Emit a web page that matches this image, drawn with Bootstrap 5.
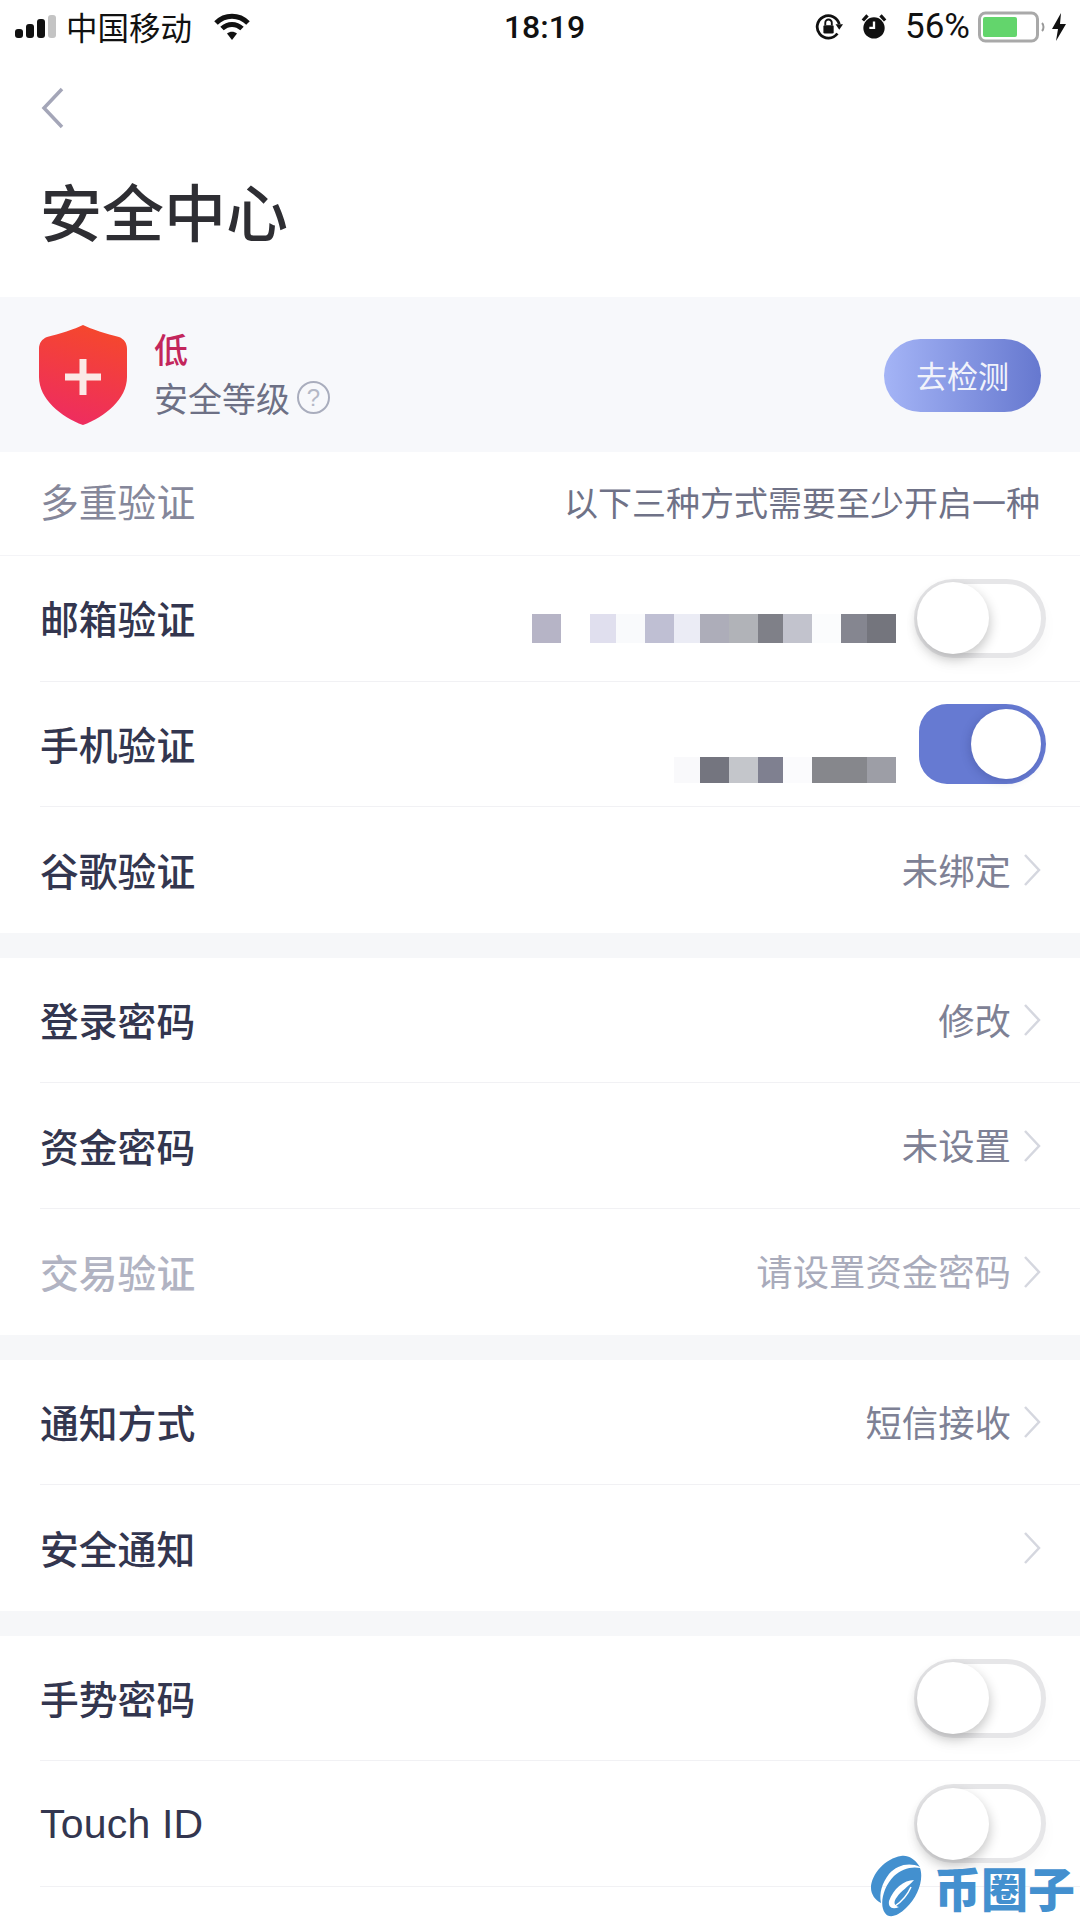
<!DOCTYPE html>
<html lang="zh-CN">
<head>
    <meta charset="UTF-8">
    <meta name="viewport" content="width=device-width, initial-scale=1.0">
    <title>安全中心</title>
    <link href="https://cdn.jsdelivr.net/npm/bootstrap@5.3.0/dist/css/bootstrap.min.css" rel="stylesheet">
    <style>
        body { width: 1080px; height: 1920px; overflow: hidden; background: #fff; font-family: "Noto Sans CJK SC", "Liberation Sans", sans-serif; color: #33364f; }
        .status-bar { height: 54px; padding: 0 13px 0 15px; color: #111; font-size: 31.5px; }
        .status-side { width: 400px; }
        .carrier { margin-left: 10px; margin-right: 21px; }
        .status-time { font-family: Roboto, "Liberation Sans", sans-serif; font-weight: 500; font-size: 32px; margin-left: 7px; }
        .status-pct { font-family: Roboto, "Liberation Sans", sans-serif; font-size: 35px; margin: 0 8px 0 18px; }
        .alarm-icon { margin-left: 18px; }
        .bolt-icon { margin-left: 6px; }
        .back-row { height: 86px; padding: 33px 0 0 41px; }
        .page-title { height: 157px; margin: 0; padding: 28px 0 0 40px; font-size: 62px; line-height: 84px; font-weight: 500; color: #2e2e33; }
        .level-band { height: 155px; background: #f7f8fb; padding: 0 39px; }
        .level-text { margin-left: 27px; }
        .level-low { font-size: 34px; line-height: 44px; font-weight: 500; color: #c3265c; }
        .level-name { font-size: 34px; line-height: 50px; color: #6d7085; margin-top: 2px; }
        .help-mark { width: 33px; height: 33px; border: 2px solid #a9adbd; border-radius: 50%; font-size: 24px; line-height: 29px; text-align: center; color: #b4b8c6; margin-left: 7px; font-family: "Liberation Sans", sans-serif; }
        .check-btn { width: 157px; height: 73px; margin-top: 2px; border: 0; border-radius: 37px; background: linear-gradient(90deg, #a4b4f6, #6678cf); color: #f1f3fb; font-size: 31px; padding: 0; }
        .note-row { height: 104px; padding: 0 40px 4px 40px; border-bottom: 1px solid #f4f4f7; }
        .note-row .row-label { color: #85879a; }
        .note-text { font-size: 34px; color: #6f7287; }
        .set-row { height: 125.6px; margin-left: 40px; padding-right: 39px; border-bottom: 1px solid #f1f1f4; }
        .set-row:last-child { border-bottom: 0; }
        .row-label { font-size: 38.8px; font-weight: 500; color: #33364f; white-space: nowrap; margin-bottom: 2px; }
        .row-label.latin { font-family: "Liberation Sans", Arial, sans-serif; font-size: 41px; font-weight: 400; letter-spacing: .2px; margin: 2px 0 0; }
        .row-value { font-size: 36.4px; color: #7e8195; margin-right: 12px; margin-bottom: 2px; }
        .row-off .row-label { color: #b1b3c2; }
        .row-off .row-value { color: #a9abbb; }
        .chev { width: 18px; height: 34px; }
        .gap-band { height: 25px; background: #f6f7f9; }
        .blur-strip { height: 29px; margin-right: 18px; margin-top: 20px; }
        .blur-strip.lower { height: 26px; margin-top: 52px; margin-right: 23px; }
        .blur-strip span { height: 100%; }
        .toggle-track { width: 132px; height: 79px; border: 5px solid #e6e6e8; border-radius: 40px; background: #fff; margin-right: -5px; padding: 0 0 0 0; }
        .toggle-knob { width: 72px; height: 72px; border-radius: 50%; background: #fff; box-shadow: 1px 5px 12px rgba(0,0,0,.22); margin-left: -2px; }
        .toggle-track.is-on { border: 0; width: 127px; height: 80px; background: #667ad2; padding-right: 5px; border-radius: 28px 40px 40px 28px; }
        .toggle-track.is-on .toggle-knob { width: 70px; height: 70px; margin-left: 0; box-shadow: -2px 2px 8px rgba(40,50,110,.25); }
        .toggle-track.is-off-shadow { box-shadow: 0 8px 14px rgba(0,0,0,.03); }
        .page-body { position: relative; height: 1920px; overflow: hidden; }
        .water-mark { position: absolute; left: 870px; top: 1855px; height: 63px; }
        .water-text { font-weight: 900; font-size: 47px; line-height: 63px; color: #4390cf; margin-left: 12px; white-space: nowrap; }
    </style>
</head>
<body>
<div class="page-body">
    <div class="status-bar d-flex align-items-center justify-content-between">
        <div class="status-side d-flex align-items-center">
            <svg width="41" height="24" viewBox="0 0 41 24"><rect x="0" y="14" width="8" height="9" rx="3" fill="#111"/><rect x="11" y="9" width="8" height="14" rx="3" fill="#111"/><rect x="22" y="4" width="8" height="19" rx="3" fill="#111"/><rect x="33" y="0" width="8" height="23" rx="3" fill="#c4c4c4"/></svg>
            <span class="carrier">中国移动</span>
            <svg width="38" height="28" viewBox="0 0 38 28"><path d="M3 10C12 1 26 1 35 10" fill="none" stroke="#111" stroke-width="5"/><path d="M9 15.500C15 10 23 10 29 15.500" fill="none" stroke="#111" stroke-width="5"/><path d="M14 20.500C17 18 21 18 24 20.500L19 27Z" fill="#111"/></svg>
        </div>
        <div class="status-time">18:19</div>
        <div class="status-side d-flex align-items-center justify-content-end">
            <svg width="28" height="30" viewBox="0 0 30 30"><path d="M24 22A12 12 0 1 1 26 12" fill="none" stroke="#111" stroke-width="3"/><path d="M22 12L30 12L26 18Z" fill="#111"/><rect x="9" y="13" width="11" height="9" rx="1.500" fill="#111"/><path d="M11 13V10.500A3.500 3.500 0 0 1 18 10.500V13" fill="none" stroke="#111" stroke-width="2"/></svg>
            <svg class="alarm-icon" width="26" height="30" viewBox="0 0 28 30"><circle cx="14" cy="16" r="11.500" fill="#111"/><path d="M14 9V16H9" fill="none" stroke="#fff" stroke-width="2.500"/><path d="M2 8L7 2.500M26 8L21 2.500" stroke="#111" stroke-width="3.500"/></svg>
            <span class="status-pct">56%</span>
            <svg width="67" height="34" viewBox="0 0 67 34"><rect x="1.500" y="3" width="58" height="28" rx="6" fill="#fff" stroke="#a9a9a9" stroke-width="3"/><rect x="5" y="7" width="34" height="20" rx="2" fill="#63d56c"/><path d="M64 13C66 15 66 19 64 21" fill="none" stroke="#999" stroke-width="2"/></svg>
            <svg class="bolt-icon" width="16" height="30" viewBox="0 0 16 30"><path d="M10 1L1 17H7L5 29L15 12H9Z" fill="#111"/></svg>
        </div>
    </div>

    <div class="back-row">
        <svg class="d-block" width="24" height="42" viewBox="0 0 24 42"><path d="M21 2L3 21L21 40" fill="none" stroke="#a4a6b8" stroke-width="3.500"/></svg>
    </div>
    <h1 class="page-title">安全中心</h1>

    <div class="level-band d-flex align-items-center justify-content-between">
        <div class="d-flex align-items-center">
            <svg width="88" height="100" viewBox="0 0 88 100">
                <defs><linearGradient id="shieldFill" x1="0.650" y1="0" x2="0.400" y2="1"><stop offset="0" stop-color="#f5482c"/><stop offset="1" stop-color="#ee2c60"/></linearGradient></defs>
                <path d="M44 0C52 4 68 9 80 12C85 14 88 18 88 24V52C88 74 66 92 44 100C22 92 0 74 0 52V24C0 18 3 14 8 12C20 9 36 4 44 0Z" fill="url(#shieldFill)"/>
                <path d="M44 34V70M26 52H62" stroke="#fbe9e6" stroke-width="7"/>
            </svg>
            <div class="level-text">
                <div class="level-low">低</div>
                <div class="level-name d-flex align-items-center">安全等级<span class="help-mark">?</span></div>
            </div>
        </div>
        <button class="btn check-btn" type="button">去检测</button>
    </div>

    <div class="note-row d-flex align-items-center justify-content-between">
        <span class="row-label fw-normal">多重验证</span>
        <span class="note-text">以下三种方式需要至少开启一种</span>
    </div>

    <div class="list-rows">
        <div class="set-row d-flex align-items-center">
            <span class="row-label me-auto">邮箱验证</span>
            <div class="blur-strip d-flex" data-cells="29:#b6b4c6,29:#fff,26:#e0dfee,29:#f9fafc,29:#bfbfd3,26:#ebecf5,29:#adadb9,29:#b1b3b8,25:#7f8088,29:#c2c3cd,29:#fbfcfd,26:#858690,29:#74757d"></div>
            <div class="toggle-track is-off-shadow d-flex align-items-center"><div class="toggle-knob"></div></div>
        </div>
        <div class="set-row d-flex align-items-center">
            <span class="row-label me-auto">手机验证</span>
            <div class="blur-strip lower d-flex" data-cells="26:#f9f9fb,29:#74757f,29:#c4c6cb,25:#7f8090,29:#fbfbfd,55:#86878c,29:#9d9ea6"></div>
            <div class="toggle-track is-on d-flex align-items-center justify-content-end"><div class="toggle-knob"></div></div>
        </div>
        <div class="set-row d-flex align-items-center">
            <span class="row-label me-auto">谷歌验证</span>
            <span class="row-value">未绑定</span>
            <svg class="chev" viewBox="0 0 18 34"><path d="M2 2L16 17L2 32" fill="none" stroke="#d5d7df" stroke-width="2.500"/></svg>
        </div>
    </div>
    <div class="gap-band"></div>

    <div class="list-rows">
        <div class="set-row d-flex align-items-center">
            <span class="row-label me-auto">登录密码</span>
            <span class="row-value">修改</span>
            <svg class="chev" viewBox="0 0 18 34"><path d="M2 2L16 17L2 32" fill="none" stroke="#d5d7df" stroke-width="2.500"/></svg>
        </div>
        <div class="set-row d-flex align-items-center">
            <span class="row-label me-auto">资金密码</span>
            <span class="row-value">未设置</span>
            <svg class="chev" viewBox="0 0 18 34"><path d="M2 2L16 17L2 32" fill="none" stroke="#d5d7df" stroke-width="2.500"/></svg>
        </div>
        <div class="set-row row-off d-flex align-items-center">
            <span class="row-label me-auto">交易验证</span>
            <span class="row-value">请设置资金密码</span>
            <svg class="chev" viewBox="0 0 18 34"><path d="M2 2L16 17L2 32" fill="none" stroke="#d5d7df" stroke-width="2.500"/></svg>
        </div>
    </div>
    <div class="gap-band"></div>

    <div class="list-rows">
        <div class="set-row d-flex align-items-center">
            <span class="row-label me-auto">通知方式</span>
            <span class="row-value">短信接收</span>
            <svg class="chev" viewBox="0 0 18 34"><path d="M2 2L16 17L2 32" fill="none" stroke="#d5d7df" stroke-width="2.500"/></svg>
        </div>
        <div class="set-row d-flex align-items-center">
            <span class="row-label me-auto">安全通知</span>
            <svg class="chev" viewBox="0 0 18 34"><path d="M2 2L16 17L2 32" fill="none" stroke="#d5d7df" stroke-width="2.500"/></svg>
        </div>
    </div>
    <div class="gap-band"></div>

    <div class="list-rows">
        <div class="set-row d-flex align-items-center">
            <span class="row-label me-auto">手势密码</span>
            <div class="toggle-track is-off-shadow d-flex align-items-center"><div class="toggle-knob"></div></div>
        </div>
        <div class="set-row d-flex align-items-center">
            <span class="row-label latin me-auto">Touch ID</span>
            <div class="toggle-track is-off-shadow d-flex align-items-center"><div class="toggle-knob"></div></div>
        </div>
        <div class="set-row"></div>
    </div>

    <div class="water-mark d-flex align-items-center">
        <svg width="52" height="63" viewBox="0 0 52 63">
            <path d="M50 12C44 3 38 0 31 1C16 3 1 19 1 33C1 39 5 45 11 48C9 38 12 28 19 19C27 10 39 7 50 12Z" fill="#4390cf"/>
            <path d="M50 13C54 24 48 42 36 53C28 61 19 64 15 58C9 50 13 32 24 21C31 14 42 11 50 13Z" fill="#4390cf"/>
            <path d="M44 25C34 25 23 34 19 46C18 52 22 55 29 52C24 51 23 47 27 42C31 36 38 32 44 25Z" fill="#fff"/>
            <path d="M41 32C37 41 31 47 25 51" fill="none" stroke="#fff" stroke-width="1.500"/>
        </svg>
        <span class="water-text">币圈子</span>
    </div>
</div>

<script>
    // blurred-out account numbers, drawn from width:colour lists
    document.querySelectorAll(".blur-strip").forEach((strip) => {
        strip.dataset.cells.split(",").forEach((cell) => {
            let parts = cell.split(":");
            let block = document.createElement("span");
            block.style.width = parts[0] + "px";
            block.style.background = parts[1];
            strip.appendChild(block);
        });
    });
</script>
<script src="https://cdn.jsdelivr.net/npm/bootstrap@5.3.0/dist/js/bootstrap.bundle.min.js"></script>
</body>
</html>
